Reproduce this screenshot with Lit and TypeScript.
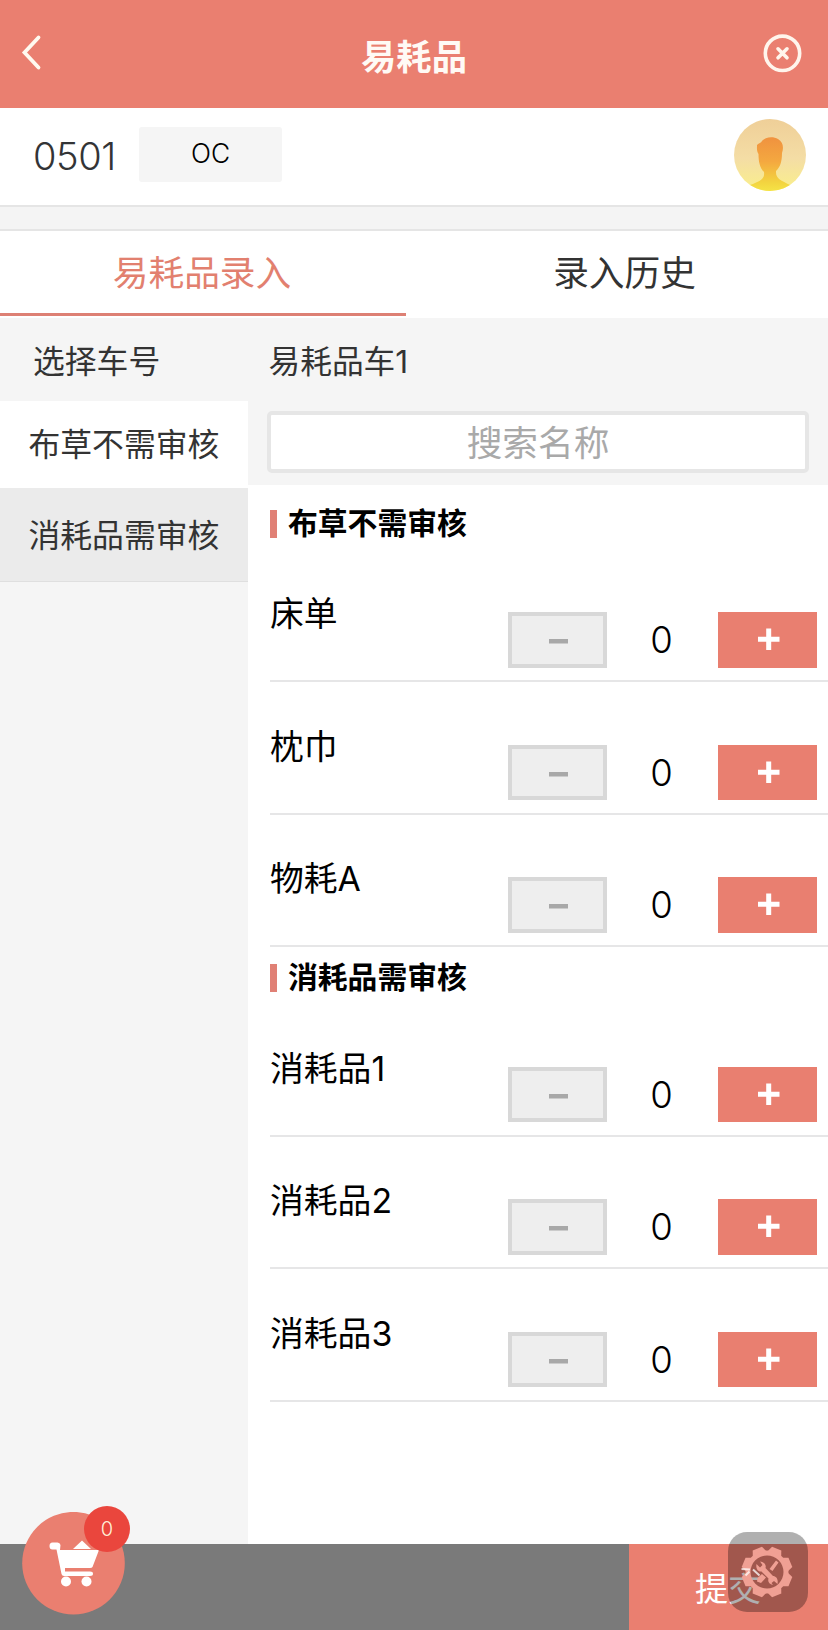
import { LitElement, html, css, svg } from "lit";
import { customElement, property, state } from "lit/decorators.js";

interface Item {
  name: string;
  count: number;
}

interface Group {
  title: string;
  items: Item[];
}

@customElement("quantity-row")
class QuantityRow extends LitElement {
  @property() name = "";
  @property({ type: Number }) count = 0;

  static styles = css`
    :host {
      display: grid;
      grid-template-columns: 238px 99px 111px 99px;
      box-sizing: border-box;
      height: 132.5px;
      padding: 62.8px 0 12.2px;
      border-bottom: 2px solid #e6e6e7;
    }
    .name {
      font-size: 33.8px;
      line-height: 36px;
      margin-top: -16px;
      white-space: nowrap;
    }
    .btn {
      display: flex;
      align-items: center;
      justify-content: center;
      box-sizing: border-box;
      height: 55.5px;
      padding: 0;
      border: 0;
      border-radius: 0;
    }
    .minus {
      background: #eeeeee;
      border: 4px solid #d8d8d8;
    }
    .plus {
      background: #e97f70;
    }
    .count {
      font-size: 36.5px;
      font-weight: 350;
      line-height: 57px;
      text-align: center;
      padding-right: 2px;
    }
  `;

  private change(step: number) {
    this.count = Math.max(0, this.count + step);
  }

  render() {
    return html`
      <div class="name">${this.name}</div>
      <button class="btn minus" @click=${() => this.change(-1)}>
        <svg width="24" height="24" viewBox="0 0 24 24">
          <rect x="3" y="11" width="19" height="4.5" fill="#a8a8a8" />
        </svg>
      </button>
      <div class="count">${this.count}</div>
      <button class="btn plus" @click=${() => this.change(1)}>
        <svg width="24" height="24" viewBox="0 0 24 24">
          <path d="M2 11.3H23.5M12.700 .5V22" stroke="#fff" stroke-width="5" />
        </svg>
      </button>
    `;
  }
}

@customElement("app-root")
class AppRoot extends LitElement {
  @state() private groups: Group[] = [
    {
      title: "布草不需审核",
      items: [
        { name: "床单", count: 0 },
        { name: "枕巾", count: 0 },
        { name: "物耗A", count: 0 },
      ],
    },
    {
      title: "消耗品需审核",
      items: [
        { name: "消耗品1", count: 0 },
        { name: "消耗品2", count: 0 },
        { name: "消耗品3", count: 0 },
      ],
    },
  ];

  static styles = css`
    :host {
      display: flex;
      flex-direction: column;
      position: relative;
      box-sizing: border-box;
      width: 828px;
      height: 1630px;
      overflow: hidden;
      background: #fff;
      color: #000;
      font-family: Inter, "Noto Sans CJK SC", sans-serif;
    }
    svg {
      display: block;
    }
    .header {
      display: grid;
      grid-template-columns: 60px 1fr 60px;
      align-items: center;
      height: 108px;
      box-sizing: border-box;
      padding: 0 16px;
      background: #ea7f70;
      color: #fffaf5;
    }
    .title {
      text-align: center;
      font-size: 35.3px;
      font-weight: 700;
      line-height: 44px;
      padding-top: 7px;
    }
    .close {
      justify-self: end;
      margin-right: 9px;
    }
    .room {
      display: flex;
      align-items: center;
      height: 97px;
      padding: 0 22px 0 33px;
    }
    .number {
      width: 106px;
      margin-top: -2px;
      font-size: 38px;
      font-weight: 300;
      letter-spacing: -0.4px;
      color: #333436;
    }
    .status {
      width: 143px;
      height: 55px;
      line-height: 53px;
      margin-top: -4px;
      border-radius: 3px;
      background: #f5f5f5;
      text-align: center;
      font-size: 26.3px;
      font-weight: 300;
    }
    .avatar {
      margin-left: auto;
      margin-top: -4px;
    }
    .gap {
      height: 22px;
      background: #f4f4f4;
      border-top: 2px solid #e5e5e5;
      border-bottom: 2px solid #e5e5e5;
    }
    .tabs {
      display: flex;
      height: 87px;
    }
    .tab {
      flex: 1;
      box-sizing: border-box;
      text-align: center;
      font-size: 35.7px;
      line-height: 84px;
      height: 85px;
      color: #333;
    }
    .tab.on {
      flex: 0 0 406px;
      padding-right: 2px;
      color: #e2806f;
      border-bottom: 3px solid #dd8074;
    }
    .tab:last-child {
      padding-left: 15px;
    }
    .body {
      flex: 1;
      display: grid;
      grid-template-columns: 248px 1fr;
      min-height: 0;
    }
    .side {
      background: #f5f5f5;
      font-size: 31.8px;
      color: #333;
      white-space: nowrap;
    }
    .side-title {
      height: 83px;
      line-height: 87px;
      padding-left: 33px;
    }
    .cat {
      height: 87px;
      line-height: 87px;
      padding-left: 28.5px;
      background: #fff;
    }
    .cat.grey {
      height: 93px;
      line-height: 95px;
      background: #ebebeb;
      border-bottom: 1px solid #dfdfdf;
    }
    .top {
      height: 166.5px;
      background: #f5f5f5;
    }
    .cart-no {
      height: 92.5px;
      line-height: 87px;
      padding-left: 20.5px;
      font-size: 31.7px;
      color: #333;
      box-sizing: border-box;
    }
    .search {
      box-sizing: border-box;
      width: 542px;
      height: 62px;
      margin-left: 19px;
      border: 4px solid #e6e6e6;
      border-radius: 5px;
      background: #fff;
      color: #a9a9a9;
      font-size: 35.7px;
      line-height: 56px;
      text-align: center;
    }
    .list {
      padding: 8px 0 0 22px;
    }
    .group-title {
      display: flex;
      align-items: center;
      gap: 11px;
      height: 28px;
      padding: 17px 0 12px;
      font-size: 29.8px;
      line-height: 28px;
      font-weight: 700;
    }
    .group-name {
      margin-top: -2px;
    }
    .mark {
      width: 7px;
      height: 28px;
      background: #e08075;
    }
    .footer {
      display: flex;
      justify-content: flex-end;
      height: 86px;
      background: #7a7a7a;
    }
    .submit {
      width: 199px;
      box-sizing: border-box;
      padding-left: 66px;
      background: #ea7f70;
      color: #fff;
      font-size: 33px;
      line-height: 90px;
    }
    .cart {
      position: absolute;
      left: 22px;
      top: 1512px;
    }
    .badge {
      position: absolute;
      left: 62px;
      top: -6px;
      width: 46px;
      height: 46px;
      border-radius: 50%;
      background: #ea463d;
      color: #fff0d8;
      font-size: 20px;
      font-weight: 300;
      line-height: 46px;
      text-align: center;
    }
    .tool {
      position: absolute;
      left: 728px;
      top: 1532px;
    }
  `;

  private gear() {
    return Array.from(
      { length: 8 },
      (_, i) => svg`<path d="M-7.5 -19 L-5 -25.3 H5 L7.5 -19 Z" transform="rotate(${i * 45 + 22.5})" />`
    );
  }

  render() {
    return html`
      <div class="header">
        <svg width="32" height="44" viewBox="0 0 32 44">
          <path d="M22.500 5.500 8.500 20.500 22.500 35.500" fill="none" stroke="#fffaf0" stroke-width="3.8" stroke-linecap="round" />
        </svg>
        <div class="title">易耗品</div>
        <svg class="close" width="40" height="42" viewBox="0 0 40 42">
          <circle cx="19.500" cy="20.300" r="17.200" fill="none" stroke="#fff5ec" stroke-width="3.6" />
          <path d="M15 15.800 24 24.800M24 15.800 15 24.800" stroke="#fff5ec" stroke-width="3.6" stroke-linecap="round" />
        </svg>
      </div>

      <div class="room">
        <div class="number">0501</div>
        <div class="status">OC</div>
        <svg class="avatar" width="72" height="72" viewBox="0 0 72 72">
          <defs>
            <linearGradient id="sky" x2="0" y2="1">
              <stop offset="0" stop-color="#efcf98" />
              <stop offset=".55" stop-color="#f4dda5" />
              <stop offset="1" stop-color="#faf08a" />
            </linearGradient>
            <linearGradient id="man" x2="0" y2="1">
              <stop offset="0" stop-color="#f0923f" />
              <stop offset=".45" stop-color="#f4a840" />
              <stop offset=".85" stop-color="#f3d540" />
              <stop offset="1" stop-color="#f5e346" />
            </linearGradient>
            <clipPath id="disc"><circle cx="36" cy="36" r="36" /></clipPath>
          </defs>
          <circle cx="36" cy="36" r="36" fill="url(#sky)" />
          <path clip-path="url(#disc)" fill="url(#man)"
            d="M23 26C25 24 27 24 28 22C31 18 39 17 44 20C49 23 50 28 48 34C48 43 46 48 42 52C41.500 60 47 61 56 66L52 72H20L16 66C26 62 31 60 30 53C26 49 24.500 43 24.500 35C22.500 32 23 29 23 26Z" />
        </svg>
      </div>
      <div class="gap"></div>

      <div class="tabs">
        <div class="tab on">易耗品录入</div>
        <div class="tab">录入历史</div>
      </div>

      <div class="body">
        <div class="side">
          <div class="side-title">选择车号</div>
          <div class="cat">布草不需审核</div>
          <div class="cat grey">消耗品需审核</div>
        </div>
        <div class="main">
          <div class="top">
            <div class="cart-no">易耗品车1</div>
            <div class="search">搜索名称</div>
          </div>
          <div class="list">
            ${this.groups.map(
              (g) => html`
                <div class="group-title"><span class="mark"></span><span class="group-name">${g.title}</span></div>
                ${g.items.map((i) => html`<quantity-row .name=${i.name} .count=${i.count}></quantity-row>`)}
              `
            )}
          </div>
        </div>
      </div>

      <div class="footer"><div class="submit">提交</div></div>

      <div class="cart">
        <svg width="103" height="103" viewBox="0 0 103 103">
          <circle cx="51.500" cy="51.200" r="51.300" fill="#ea7f70" />
          <g fill="#fff">
            <path d="M51 37 60 28.500 69 37Z" />
            <path d="M38 38H77L70.500 55Q70 56 68 56H43V59.500H68Q71 59.500 71 61.700T68 64H42Q40 64 39.500 62L34.500 37.500H30.500Q27.500 37.500 27.500 34T30.500 30.500H35.500Q38 30.500 38.500 33Z" />
            <circle cx="44" cy="69.500" r="5" />
            <circle cx="64.500" cy="69.500" r="5" />
          </g>
        </svg>
        <div class="badge">0</div>
      </div>

      <svg class="tool" width="80" height="80" viewBox="0 0 80 80">
        <rect width="80" height="80" rx="19" fill="#000" fill-opacity=".31" />
        <g transform="translate(39 40)" fill="#f0a094">
          ${this.gear()}
          <path fill-rule="evenodd" d="M0-21.500A21.500 21.500 0 1 1 0 21.500A21.500 21.500 0 1 1 0-21.500ZM0-16.500A16.500 16.500 0 1 0 0 16.500A16.500 16.500 0 1 0 0-16.500Z" />
          <path d="M9-11.500 11.500-9.500 5.500-1 2.500-3ZM-5 2-1 5.500-6 11-10 9.500-9.500 6Z" />
          <path d="M-7-10.500C-2.500-10-.5-7-1.500-4L6 4C9 4 11.500 7 10.500 12L7 9 4.500 11 6 13C2 12 .5 9.500 1.500 6.500L-5.500-.5C-8.500 0-11.500-3-10.500-8L-7-4.500-4.500-7Z" />
        </g>
        <path d="M13.500 37 22 37.500M17.500 43.500 21.500 39.500M25 37.500 31.500 43.500" stroke="#fff" stroke-opacity=".75" stroke-width="2" />
      </svg>
    `;
  }
}
